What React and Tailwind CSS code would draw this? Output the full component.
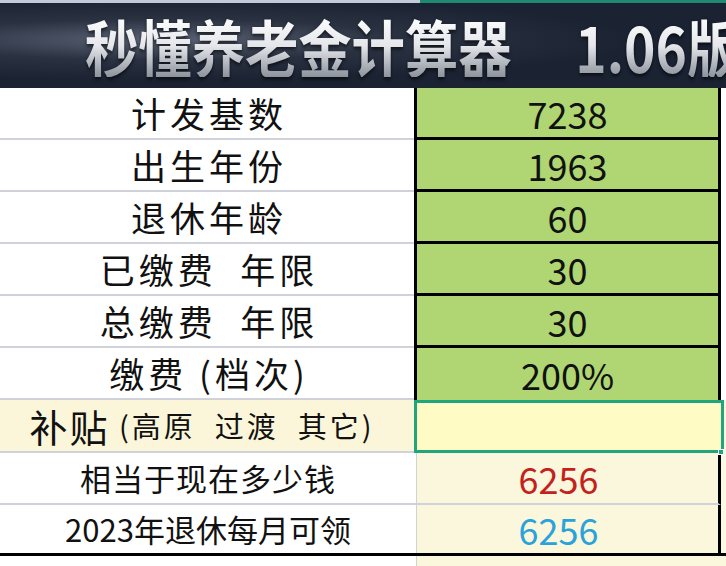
const cjk = "font-['Noto_Sans_CJK_SC','Noto_Sans',sans-serif]";

const inputRows = [
  { label: "计发基数", value: "7238" },
  { label: "出生年份", value: "1963" },
  { label: "退休年龄", value: "60" },
  { label: "已缴费  年限", value: "30" },
  { label: "总缴费  年限", value: "30" },
  { label: "缴费 (档次)", value: "200%" },
];

function GreenRow({ label, value, last }) {
  return (
    <div className="flex h-[52px]">
      <div className="flex w-[414px] items-center justify-center whitespace-pre border-b-2 border-[#cfd2da] bg-white pl-[4px] text-[35px] tracking-[4px] text-[#111]">
        {label}
      </div>
      <div
        className={`flex w-[307px] items-center justify-center border-x-[3px] border-black bg-[#afd672] text-[36px] text-[#111] ${
          last ? "" : "border-b-[3px]"
        }`}
      >
        {value}
      </div>
      <div className="flex-1 bg-white" />
    </div>
  );
}

export default function App() {
  return (
    <div className={`h-[566px] w-[726px] overflow-hidden bg-white ${cjk}`}>
      <header className="h-[88px] overflow-hidden bg-[radial-gradient(ellipse_at_22%_45%,#5a6274_0%,#2a3242_30%,#1b2333_60%)]">
        <div className="flex h-[3px]">
          <div className="w-[420px] bg-[#c3cbd8]" />
          <div className="flex-1 bg-[#1e8a72]" />
        </div>
        <div className="flex h-[85px] items-center whitespace-nowrap pl-[85px]">
          <span className="inline-block origin-left scale-x-[0.86] bg-gradient-to-b from-white via-[#e4e6ea] to-[#8d939c] bg-clip-text text-[62px] font-bold leading-none text-transparent drop-shadow-[0_2px_2px_rgba(0,0,0,0.7)]">
            秒懂养老金计算器<span className="ml-[74px]">1.06版</span>
          </span>
        </div>
      </header>

      {inputRows.map((row, i) => (
        <GreenRow key={row.label} label={row.label} value={row.value} last={i === inputRows.length - 1} />
      ))}

      <div className="flex h-[53px]">
        <div className="flex w-[414px] items-center justify-center whitespace-pre border-b-2 border-[#cfd2da] bg-[#fbf6da] pr-[10px] text-[#111]">
          <span className="text-[38px] tracking-[2px]">补贴</span>
          <span className="text-[29px] tracking-[3px]"> (高原  过渡  其它)</span>
        </div>
        <div className="relative w-[310px] border-[3px] border-[#20a67c] bg-[#fffbc4]">
          <div className="absolute -bottom-[5px] -right-[3px] h-[6px] w-[6px] border border-white bg-[#20a67c]" />
        </div>
        <div className="flex-1 bg-[#fbf8e4]" />
      </div>

      <div className="flex h-[52px]">
        <div className="flex w-[416px] items-center justify-center border-b-2 border-[#cfd2da] bg-white text-[31px] tracking-[1px] text-[#111]">
          相当于现在多少钱
        </div>
        <div className="flex w-[305px] items-center justify-center border-b-2 border-l border-r-[3px] border-[#cfd2da] border-r-black bg-[#fbf7dc] pr-[18px] text-[36px] text-[#c4211d]">
          6256
        </div>
        <div className="flex-1 bg-[#fbf8e4]" />
      </div>

      <div className="flex h-[51px] border-b-[3px] border-black">
        <div className="flex w-[416px] items-center justify-center bg-white text-[31px] text-[#111]">
          2023年退休每月可领
        </div>
        <div className="flex w-[305px] items-center justify-center border-l border-r-[3px] border-[#cfd2da] border-r-black bg-[#fbf7dc] pr-[18px] text-[36px] text-[#2aa2da]">
          6256
        </div>
        <div className="flex-1 bg-[#fbf8e4]" />
      </div>

      <div className="flex h-[10px]">
        <div className="w-[416px] bg-white" />
        <div className="flex-1 border-l border-[#cfd2da] bg-[#fbf7dc]" />
      </div>
    </div>
  );
}
